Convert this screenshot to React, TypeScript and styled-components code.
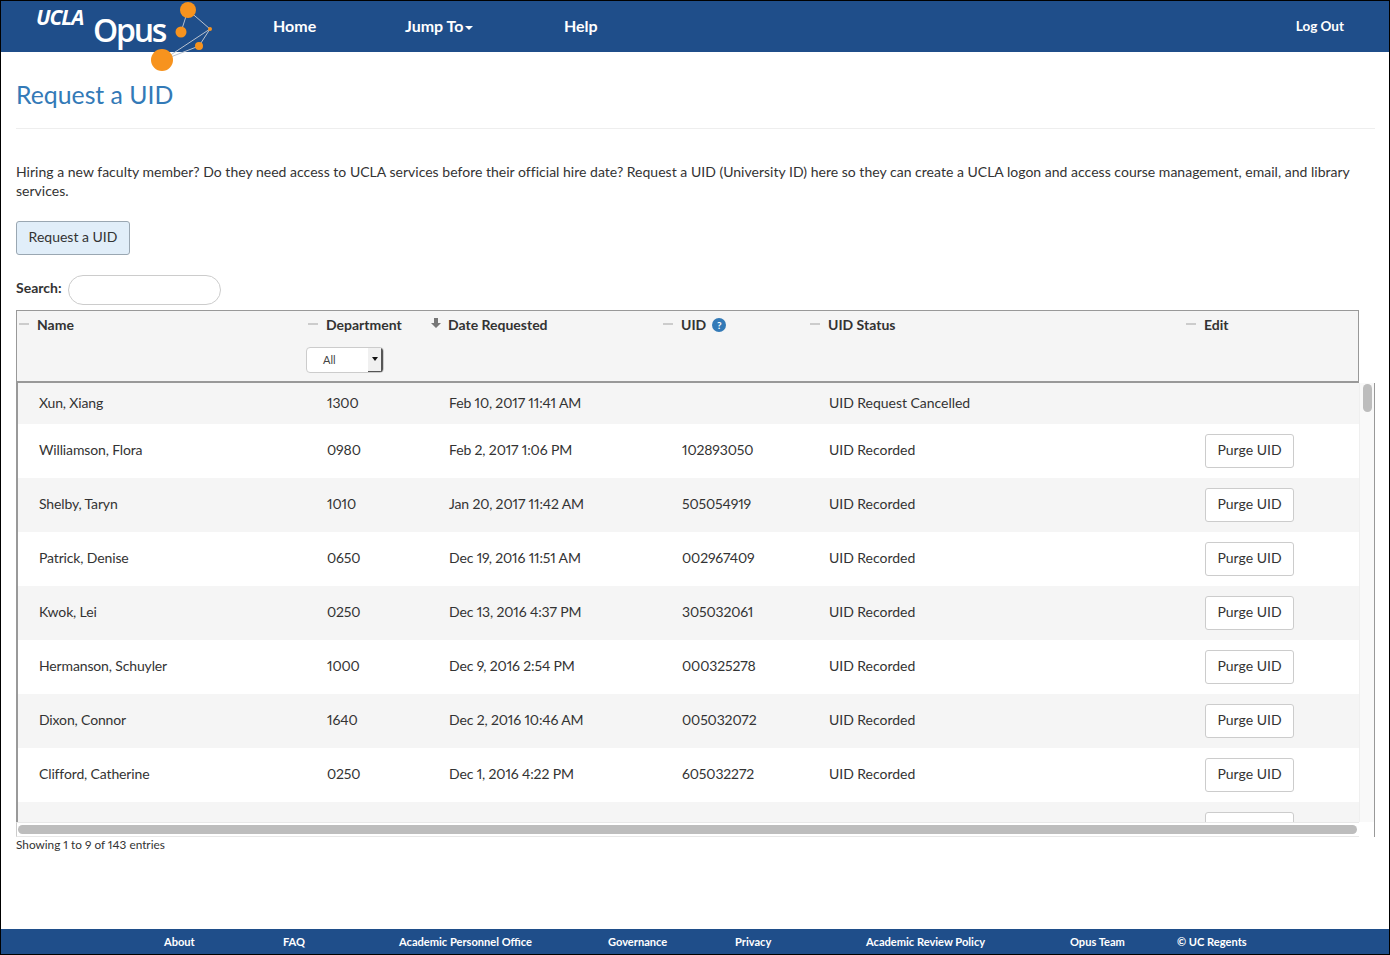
import React from "react";
import styled, { createGlobalStyle } from "styled-components";

const Global = createGlobalStyle`
  html, body { margin: 0; padding: 0; background: #fff; }
  body {
    font-family: "Lato", "Liberation Sans", sans-serif;
    color: #333;
    font-variant-numeric: proportional-nums;
    font-feature-settings: "pnum" 1;
  }
  * { box-sizing: border-box; }
`;

const Page = styled.div`
  width: 1390px;
  height: 955px;
  border: 1px solid #000;
  display: flex;
  flex-direction: column;
  overflow: hidden;
  position: relative;
`;

const Header = styled.header`
  height: 51px;
  flex: none;
  background: #1f4e8a;
  display: flex;
  align-items: center;
  position: relative;
  color: #fff;
  padding-bottom: 2px;
`;

const LogoArt = styled.svg`
  position: absolute;
  left: 0;
  top: -1px;
  z-index: 2;
  pointer-events: none;
`;

const LogoUcla = styled.span`
  position: absolute;
  left: 35px;
  top: 2px;
  z-index: 3;
  font: italic 700 21px "Open Sans", sans-serif;
  letter-spacing: -1px;
  color: #fff;
`;

const LogoOpus = styled.span`
  position: absolute;
  left: 92px;
  top: 7px;
  z-index: 3;
  font: 600 32px "Open Sans", sans-serif;
  letter-spacing: -2.2px;
  color: #fff;
`;

const NavItem = styled.a<{ $w: number }>`
  width: ${(p) => p.$w}px;
  flex: none;
  font-size: 16px;
  font-weight: 700;
  color: #fff;
`;

const NavSpacer = styled.div`
  width: 272px;
  flex: none;
`;

const Caret = styled.span`
  display: inline-block;
  margin-left: 2px;
  vertical-align: middle;
  border-left: 4px solid transparent;
  border-right: 4px solid transparent;
  border-top: 4px solid #fff;
`;

const Logout = styled.a`
  margin-left: auto;
  margin-right: 45px;
  font-size: 13.5px;
  font-weight: 700;
  color: #fff;
`;

const Main = styled.main`
  flex: 1;
  padding: 0 14px 0 15px;
`;

const Title = styled.h1`
  margin: 0;
  padding-top: 26px;
  height: 77px;
  font-size: 24.8px;
  line-height: 33px;
  font-weight: 400;
  color: #337ab7;
  border-bottom: 1px solid #eee;
`;

const Intro = styled.p`
  margin: 33px 0 0;
  font-size: 14px;
  line-height: 19px;
  letter-spacing: 0.017px;
  color: #333;
`;

const PrimaryButton = styled.button`
  display: block;
  margin-top: 21px;
  width: 114px;
  height: 34px;
  padding: 0 0 3px;
  font: 400 14px "Lato", sans-serif;
  color: #333;
  background: #e1eef9;
  border: 1px solid #9aa7b2;
  border-radius: 3px;
`;

const SearchRow = styled.div`
  margin-top: 20px;
  height: 30px;
  display: flex;
  align-items: center;
  gap: 6px;
`;

const SearchLabel = styled.label`
  padding-bottom: 5px;
  font-size: 14px;
  font-weight: 700;
`;

const SearchInput = styled.input`
  width: 153px;
  height: 30px;
  border: 1px solid #ccc;
  border-radius: 15px;
  background: #fff;
`;

const TableArea = styled.div`
  margin-top: 5px;
  width: 1360px;
`;

const HeadBox = styled.div`
  width: 1343px;
  height: 73px;
  background: #f5f5f5;
  border: 1px solid #999;
  border-bottom-width: 2px;
  display: grid;
  grid-template-columns: 289px 122px 233px 147px 376px 1fr;
  padding-top: 6px;
`;

const HeadCell = styled.div`
  padding-left: 20px;
  position: relative;
  font-size: 14px;
  font-weight: 700;
  line-height: 16px;
  color: #333;
`;

const Dash = styled.span`
  position: absolute;
  left: 2px;
  top: 6px;
  width: 10px;
  height: 2px;
  background: #ccc;
`;

const SortArrow = styled.svg`
  position: absolute;
  left: 3px;
  top: 1px;
`;

const HelpDot = styled.span`
  display: inline-block;
  width: 14px;
  height: 14px;
  margin-left: 6px;
  border-radius: 50%;
  background: #337ab7;
  color: #fff;
  font-size: 10px;
  line-height: 14px;
  text-align: center;
  vertical-align: 1px;
`;

const SelectBox = styled.div`
  margin: 14px 0 0 -20px;
  width: 78px;
  height: 26px;
  background: #fff;
  border: 1px solid #ccc;
  border-radius: 4px;
  display: flex;
  align-items: center;
  justify-content: space-between;
  padding-left: 16px;
  font-size: 11px;
  font-weight: 400;
  color: #444;
  overflow: hidden;
`;

const SelectArrow = styled.span`
  width: 15px;
  height: 26px;
  background: #f0f0f0;
  border-right: 2px solid #555;
  border-bottom: 2px solid #555;
  display: flex;
  align-items: center;
  justify-content: center;
  &::before {
    content: "";
    border-left: 3px solid transparent;
    border-right: 3px solid transparent;
    border-top: 4px solid #111;
  }
`;

const ScrollFrame = styled.div`
  width: 1359px;
  display: flex;
  border-right: 1px solid #999;
`;

const ScrollMain = styled.div`
  width: 1343px;
  flex: none;
`;

const BodyBox = styled.div`
  height: 439px;
  overflow: hidden;
  border-left: 2px solid #999;
`;

const VColumn = styled.div`
  flex: 1;
  display: flex;
  flex-direction: column;
`;

const VTrack = styled.div`
  height: 439px;
  background: #f9f9f9;
  border-left: 1px solid #efefef;
  padding: 1px 0 0 3px;
`;

const VThumb = styled.div`
  width: 9px;
  height: 28px;
  border-radius: 5px;
  background: #bdbdbd;
`;

const Row = styled.div<{ $h: number; $alt: boolean }>`
  height: ${(p) => p.$h}px;
  background: ${(p) => (p.$alt ? "#f5f5f5" : "#fff")};
  display: grid;
  grid-template-columns: 288px 122px 233px 147px 376px 1fr;
  align-items: center;
  font-size: 14px;
  color: #333;
`;

const Cell = styled.div<{ $lift: number }>`
  padding-left: 21px;
  padding-bottom: ${(p) => p.$lift}px;
  letter-spacing: -0.14px;
  &:nth-child(5) {
    letter-spacing: -0.03px;
  }
`;

const ButtonCell = styled.div`
  padding-left: 21px;
`;

const PurgeButton = styled.button`
  display: block;
  width: 89px;
  height: 34px;
  padding: 0 0 4px;
  font: 400 14px "Lato", sans-serif;
  color: #333;
  background: #fff;
  border: 1px solid #ccc;
  border-radius: 3px;
`;

const HBar = styled.div`
  height: 15px;
  padding: 2px 2px 2px 1px;
  border-top: 1px solid #e8e8e8;
  border-bottom: 1px solid #e8e8e8;
  border-left: 1px solid #ccc;
  background: #fff;
`;

const HThumb = styled.div`
  height: 9px;
  border-radius: 5px;
  background: #bdbdbd;
`;

const Info = styled.div`
  font-size: 11.8px;
  line-height: 16px;
  color: #333;
`;

const Footer = styled.footer`
  height: 25px;
  flex: none;
  background: #1f4e8a;
  display: flex;
  align-items: center;
  color: #fff;
  font-size: 11.1px;
  font-weight: 700;
`;

const FootLink = styled.a<{ $w: number }>`
  width: ${(p) => p.$w}px;
  flex: none;
`;

const rows = [
  ["Xun, Xiang", "1300", "Feb 10, 2017 11:41 AM", "", "UID Request Cancelled"],
  ["Williamson, Flora", "0980", "Feb 2, 2017 1:06 PM", "102893050", "UID Recorded"],
  ["Shelby, Taryn", "1010", "Jan 20, 2017 11:42 AM", "505054919", "UID Recorded"],
  ["Patrick, Denise", "0650", "Dec 19, 2016 11:51 AM", "002967409", "UID Recorded"],
  ["Kwok, Lei", "0250", "Dec 13, 2016 4:37 PM", "305032061", "UID Recorded"],
  ["Hermanson, Schuyler", "1000", "Dec 9, 2016 2:54 PM", "000325278", "UID Recorded"],
  ["Dixon, Connor", "1640", "Dec 2, 2016 10:46 AM", "005032072", "UID Recorded"],
  ["Clifford, Catherine", "0250", "Dec 1, 2016 4:22 PM", "605032272", "UID Recorded"],
];

const foot: [string, number][] = [
  ["About", 119],
  ["FAQ", 116],
  ["Academic Personnel Office", 209],
  ["Governance", 127],
  ["Privacy", 131],
  ["Academic Review Policy", 204],
  ["Opus Team", 107],
  ["© UC Regents", 100],
];

export default function App() {
  return (
    <Page>
      <Global />
      <Header>
        <LogoArt width="220" height="76" viewBox="0 0 220 76">
          <g stroke="#b9c2cf" strokeWidth="1" fill="none">
            <path d="M187 10 L209 29 L162 60 M187 10 L180 32 M209 29 L198 46 L162 60" />
          </g>
          <circle cx="187" cy="10" r="8" fill="#f7931e" />
          <circle cx="180" cy="32" r="5.5" fill="#f7931e" />
          <circle cx="209" cy="29" r="2" fill="#f7931e" />
          <circle cx="198" cy="46" r="4" fill="#f7931e" />
          <circle cx="161" cy="60" r="11" fill="#f7931e" />
        </LogoArt>
        <LogoUcla>UCLA</LogoUcla>
        <LogoOpus>Opus</LogoOpus>
        <NavSpacer />
        <NavItem $w={132}>Home</NavItem>
        <NavItem $w={159}>
          Jump To<Caret />
        </NavItem>
        <NavItem $w={100}>Help</NavItem>
        <Logout>Log Out</Logout>
      </Header>
      <Main>
        <Title>Request a UID</Title>
        <Intro>
          Hiring a new faculty member? Do they need access to UCLA services before their official hire date? Request a UID (University ID) here so they can create a UCLA logon and access course management, email, and library services.
        </Intro>
        <PrimaryButton>Request a UID</PrimaryButton>
        <SearchRow>
          <SearchLabel>Search:</SearchLabel>
          <SearchInput />
        </SearchRow>
        <TableArea>
          <HeadBox>
            <HeadCell><Dash />Name</HeadCell>
            <HeadCell>
              <Dash />Department
              <SelectBox>All<SelectArrow /></SelectBox>
            </HeadCell>
            <HeadCell>
              <SortArrow width="10" height="11" viewBox="0 0 10 11">
                <path d="M3 0h4v5h3L5 10 0 5h3z" fill="#777" />
              </SortArrow>
              Date Requested
            </HeadCell>
            <HeadCell><Dash />UID<HelpDot>?</HelpDot></HeadCell>
            <HeadCell><Dash />UID Status</HeadCell>
            <HeadCell><Dash />Edit</HeadCell>
          </HeadBox>
          <ScrollFrame>
            <ScrollMain>
              <BodyBox>
                {rows.map((r, i) => (
                  <Row key={r[0]} $h={i === 0 ? 41 : 54} $alt={i % 2 === 0}>
                    {r.map((c, j) => (
                      <Cell key={j} $lift={i === 0 ? 3 : 4}>{c}</Cell>
                    ))}
                    <ButtonCell>{i > 0 && <PurgeButton>Purge UID</PurgeButton>}</ButtonCell>
                  </Row>
                ))}
                <Row $h={54} $alt>
                  <ButtonCell />
                  <ButtonCell />
                  <ButtonCell />
                  <ButtonCell />
                  <ButtonCell />
                  <ButtonCell><PurgeButton aria-label="Purge UID" /></ButtonCell>
                </Row>
              </BodyBox>
              <HBar><HThumb /></HBar>
            </ScrollMain>
            <VColumn>
              <VTrack><VThumb /></VTrack>
            </VColumn>
          </ScrollFrame>
        </TableArea>
        <Info>Showing 1 to 9 of 143 entries</Info>
      </Main>
      <Footer>
        <FootLink $w={163} />
        {foot.map(([t, w]) => (
          <FootLink key={t} $w={w}>{t}</FootLink>
        ))}
      </Footer>
    </Page>
  );
}
